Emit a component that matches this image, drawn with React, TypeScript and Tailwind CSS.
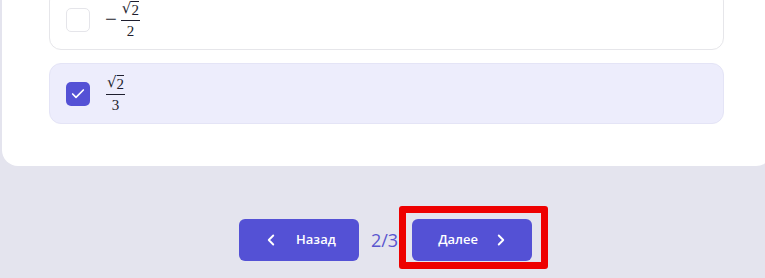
import { Check, ChevronLeft, ChevronRight } from "lucide-react";

const Sqrt2 = () => (
  <span className="flex items-start leading-none">
    <span className="font-['DejaVu_Serif',serif] text-[15px] leading-none">√</span>
    <span className="border-t-[1.5px] border-[#1e1e2e] pt-[1px] text-[15px] leading-none">2</span>
  </span>
);

const Frac = ({ den }: { den: string }) => (
  <span className="inline-flex flex-col items-center font-['Liberation_Serif',serif] text-[#1e1e2e]">
    <span className="border-b-[1.5px] border-[#1e1e2e] px-[1px] pb-[2px]">
      <Sqrt2 />
    </span>
    <span className="pt-[3px] text-[15px] leading-none">{den}</span>
  </span>
);

const Option = ({ checked, minus, den }: { checked?: boolean; minus?: boolean; den: string }) => (
  <div
    className={
      checked
        ? "flex h-[61px] items-center gap-[16px] rounded-xl border border-[#e4e4f6] bg-[#ededfc] pl-4"
        : "flex h-[61px] items-center gap-[15px] rounded-xl border border-[#e6e6ea] bg-white pl-4"
    }
  >
    {checked ? (
      <div className="flex size-6 items-center justify-center rounded-[5px] bg-[#5451d5]">
        <Check size={16} strokeWidth={2.5} className="text-white" />
      </div>
    ) : (
      <div className="size-6 rounded-[5px] border border-[#e5e5ea] bg-white" />
    )}
    <div className="flex items-center gap-[4px]">
      {minus && <span className="font-['Liberation_Serif',serif] text-[21px] leading-none text-[#1e1e2e]">−</span>}
      <Frac den={den} />
    </div>
  </div>
);

export default function App() {
  return (
    <div className="h-[278px] w-[765px] overflow-hidden bg-[#e4e4ee] font-['Open_Sans',sans-serif]">
      <div className="-mt-[11px] ml-[2px] flex w-[770px] flex-col gap-[13px] rounded-b-2xl bg-white pb-[42px] pl-[47px] pr-[48px]">
        <Option minus den="2" />
        <Option checked den="3" />
      </div>

      <div className="mt-[53px] flex items-center justify-center gap-3 pl-[6px]">
        <button className="flex h-[42px] w-[120px] items-center justify-center gap-4 rounded-md bg-[#5451d5] text-[13px] font-semibold text-white">
          <ChevronLeft size={18} strokeWidth={2.5} />
          <span>Назад</span>
        </button>
        <span className="text-[18px] text-[#5a56cf]">2/3</span>
        <div className="relative ml-[2px]">
          <button className="flex h-[42px] w-[120px] items-center justify-center gap-[14px] rounded-md bg-[#5451d5] pl-[4px] text-[13px] font-semibold text-white">
            <span>Далее</span>
            <ChevronRight size={18} strokeWidth={2.5} />
          </button>
          <div className="absolute -bottom-[8px] -left-[13px] -right-[16px] -top-[13px] rounded-[3px] border-[7px] border-[#ee0000]" />
        </div>
      </div>
    </div>
  );
}
